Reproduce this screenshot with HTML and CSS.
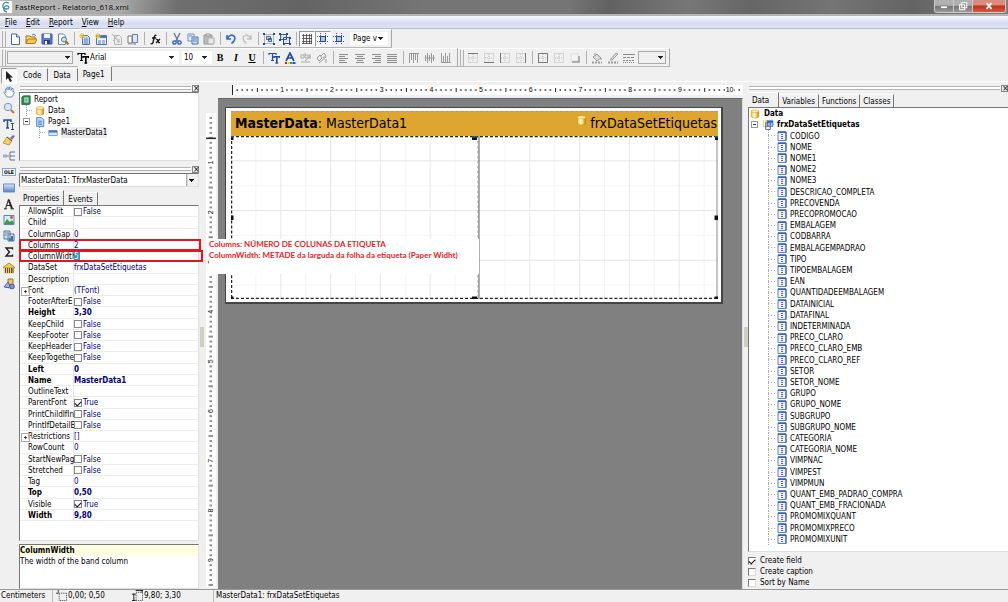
FILE: index.html
```html
<!DOCTYPE html>
<html lang="en">
<head>
<meta charset="utf-8">
<title>FastReport - Relatorio_618.xml</title>
<link rel="stylesheet" href="styles.css">
</head>
<body>
<svg class="defs" aria-hidden="true">
  <defs>
    <linearGradient id="gold"><stop offset="0" stop-color="#f3c13a"/><stop offset=".4" stop-color="#fffbd8"/><stop offset=".6" stop-color="#fbe27a"/><stop offset="1" stop-color="#c98206"/></linearGradient>
    <linearGradient id="blue" x2="0" y2="1"><stop offset="0" stop-color="#dcebfa"/><stop offset="1" stop-color="#4f81c4"/></linearGradient>
    <symbol id="new" viewBox="0 0 12 12"><path d="M2.500 1h5l3 3v7.500h-8z" fill="#fff" stroke="#49699a"/><path d="M7.500 1v3h3" fill="#dbe7f5" stroke="#49699a"/></symbol>
    <symbol id="open" viewBox="0 0 12 12"><path d="M1 10.500V3h4l1 1h4v2" fill="#f5d67a" stroke="#9b7423"/><path d="M1 10.500 3 6h9l-2 4.500z" fill="#f8c64a" stroke="#b37c1b"/><path d="M7 2q2-2 4 1" fill="none" stroke="#4b78ae"/></symbol>
    <symbol id="save" viewBox="0 0 12 12"><path d="M1 1h10v10H1z" fill="#5b78d8" stroke="#4050a8"/><path d="M3 1h6v4H3z" fill="#eef3ff"/><path d="M3 7h6v4H3z" fill="#2f3f80"/><path d="M4 8h2v3H4z" fill="#fff"/></symbol>
    <symbol id="preview" viewBox="0 0 12 12"><path d="M1.500 1h5l2 2v8.500h-7z" fill="#fff" stroke="#6d87a8"/><circle cx="7" cy="6.500" r="2.500" fill="#c9e3f2" stroke="#56717f"/><path d="m9 8.500 2.500 3" stroke="#a06c2c" stroke-width="2"/></symbol>
    <symbol id="newpage" viewBox="0 0 12 12"><path d="M3.500 2.500h5l2 2v7h-7z" fill="#c4daf3" stroke="#4b75ac"/><path d="M5 6h4M5 8h4M5 10h4" stroke="#5e83b8"/><path d="M3 0v6M0 3h6M1 1l4 4M5 1 1 5" stroke="#edbd28"/></symbol>
    <symbol id="newdlg" viewBox="0 0 12 12"><path d="M1.500 2.500h10v9h-10z" fill="#e8f0fb" stroke="#4b75ac"/><path d="M4 3h7v2H4z" fill="#3f76d2"/><path d="M3 8h3M7 8h3M3 10h3M7 10h3" stroke="#5e83b8"/><path d="M3 0v6M0 3h6M1 1l4 4M5 1 1 5" stroke="#edbd28"/></symbol>
    <symbol id="delpage" viewBox="0 0 12 12"><path d="M3.500 2.500h5l2 2v7h-7z" fill="#eee" stroke="#b4b4b4"/><path d="m1 1 7 8M7 2 2 8M6 7h3M6 9h3" stroke="#b4b4b4"/></symbol>
    <symbol id="pageset" viewBox="0 0 12 12"><path d="M1 3h4v7H1z" fill="#fff" stroke="#777"/><path d="M5.500 1.500h5v8h-5z" fill="#dfe9f4" stroke="#65809f"/><path d="M1 11h8M8 9v3" stroke="#8b9db3"/></symbol>
    <symbol id="fx" viewBox="0 0 12 12"><path d="M7.500 2.500Q6 1.500 5.300 4L4 9.500Q3.500 11.500 1.500 10.500M3 5h4M7 6.500q1.500-.5 2 1.500t2 1.500M11 6 7 10" fill="none" stroke="#111" stroke-width="1.300"/></symbol>
    <symbol id="cut" viewBox="0 0 12 12"><path d="m3 0 4 8M9 0 5 8" stroke="#5c7592" stroke-width="1.300"/><circle cx="3.500" cy="9.500" r="1.700" fill="none" stroke="#2556b4" stroke-width="1.300"/><circle cx="8.500" cy="9.500" r="1.700" fill="none" stroke="#2556b4" stroke-width="1.300"/></symbol>
    <symbol id="copy" viewBox="0 0 12 12"><path d="M1 1h6v7H1z" fill="#eaf2fc" stroke="#6d8fc0"/><path d="M5 4h6v7H5z" fill="#c9def6" stroke="#4a74b2"/><path d="M6 6h4M6 8h4M2 3h3" stroke="#6688bb"/></symbol>
    <symbol id="paste" viewBox="0 0 12 12"><path d="M1 2h8v9H1z" fill="#bbb" stroke="#999"/><path d="M3 1h4v2H3z" fill="#eee" stroke="#999"/><path d="M5 5h6v6H5z" fill="#e8e8e8" stroke="#aaa"/></symbol>
    <symbol id="undo" viewBox="0 0 12 12"><path d="M2 2v4h4M2 5.500Q6 0 9.500 3.500 11 7 6.500 10.500" fill="none" stroke="#2f67c5" stroke-width="1.600"/></symbol>
    <symbol id="redo" viewBox="0 0 12 12"><path d="M10 2v4H6M10 5.500Q6 0 2.500 3.500 1 7 5.500 10.500" fill="none" stroke="#c0c0c0" stroke-width="1.400"/></symbol>
    <symbol id="group" viewBox="0 0 12 12"><path d="M1.500 1.500h9v9h-9z" fill="none" stroke="#7b92b3" stroke-width=".6"/><path d="M3.500 3.500h4v3h-4zM5.500 5.500h3v3h-3z" fill="#bcd4ef" stroke="#254a80" stroke-width=".8"/><path d="M0 0h2v2H0zM10 0h2v2h-2zM0 10h2v2H0zM10 10h2v2h-2z" fill="#254a80"/></symbol>
    <symbol id="ungroup" viewBox="0 0 12 12"><path d="M1.500 1.500h6v5h-6zM4.500 4.500h6v6h-6z" fill="#d4e3f5" stroke="#254a80" stroke-width=".9"/><path d="M0 0h2v2H0zM7 0h2v2H7zM0 6h2v2H0zM10 10h2v2h-2zM4 10h2v2H4zM10 4h2v2h-2z" fill="#254a80"/></symbol>
    <symbol id="gridic" viewBox="0 0 12 12"><path d="M2.500 1v10M5.500 1v10M8.500 1v10M1 2.500h10M1 5.500h10M1 8.500h10M10.500 1v10M1 10.500h10" stroke="#444" stroke-width=".8"/></symbol>
    <symbol id="snap" viewBox="0 0 12 12"><path d="M3.500 0v12M8.500 0v12M0 3.500h12M0 8.500h12" stroke="#3d557b" stroke-dasharray="1 1"/><path d="M3.500 3.500h5v5h-5z" fill="#a8c8ee" stroke="#224a8c"/></symbol>
    <symbol id="tt" viewBox="0 0 12 12"><path d="M1 3V1.500h7V3M4.500 1.500v7M3 8.500h3" fill="none" stroke="currentColor" stroke-width="1.200"/><path d="M6 6V4.800h5.500V6M8.800 5v6M7.500 11h2.600" fill="none" stroke="currentColor" stroke-width="1.600"/></symbol>
    <symbol id="fcolor" viewBox="0 0 12 12"><path d="m2 9 4-8 4 8M3.500 6h5" fill="none" stroke="#1c4fa8" stroke-width="1.700"/><path d="M1 10h2v2H1z" fill="#d22"/><path d="M3.500 10h2v2h-2z" fill="#f2c200"/><path d="M6 10h2v2H6z" fill="#22a04a"/><path d="M8.500 10h3v2h-3z" fill="#2752d8"/></symbol>
    <symbol id="hilite" viewBox="0 0 12 12"><path d="M0 3h4v3H1V4M5 1v5h3V3H5M11 3H9v3h2M5 9l6-5M1 10h9" fill="none" stroke="#aaa"/></symbol>
    <symbol id="rotate" viewBox="0 0 12 12"><path d="m1 6 3-3 2 3-3 3zM5 4l3-3 2 3-3 2M3 11l7-6M10 7v4" fill="none" stroke="#999"/></symbol>
    <symbol id="al" viewBox="0 0 12 12"><path d="M1 2.500h9M1 4.500h6M1 6.500h9M1 8.500h6M1 10.500h8" stroke="#8b8b8b"/></symbol>
    <symbol id="ac" viewBox="0 0 12 12"><path d="M1 2.500h10M3 4.500h6M1 6.500h10M3 8.500h6M2 10.500h8" stroke="#8b8b8b"/></symbol>
    <symbol id="ar" viewBox="0 0 12 12"><path d="M2 2.500h9M5 4.500h6M2 6.500h9M5 8.500h6M3 10.500h8" stroke="#8b8b8b"/></symbol>
    <symbol id="aj" viewBox="0 0 12 12"><path d="M1 2.500h10M1 4.500h10M1 6.500h10M1 8.500h10M1 10.500h10" stroke="#8b8b8b"/></symbol>
    <symbol id="vt" viewBox="0 0 12 12"><path d="M1.500 1v10M3.500 1v7M5.500 1v10M7.500 1v7M9.500 1v10M1 1.500h10" stroke="#999"/></symbol>
    <symbol id="vm" viewBox="0 0 12 12"><path d="M1.500 3v6M3.500 1v10M5.500 3v6M7.500 1v10M9.500 3v6M1 6h10" stroke="#999"/></symbol>
    <symbol id="vb" viewBox="0 0 12 12"><path d="M1.500 1v10M3.500 4v7M5.500 1v10M7.500 4v7M9.500 1v10M1 10.500h10" stroke="#999"/></symbol>
    <symbol id="fr" viewBox="0 0 12 12"><path d="M1.500 1.500h9v9h-9zM6 2v8M2 6h8" fill="none" stroke="#bbb" stroke-dasharray="1 1"/></symbol>
    <symbol id="frt" viewBox="0 0 12 12"><use href="#fr"/><path d="M1 1.500h10" stroke="#777"/></symbol>
    <symbol id="frb" viewBox="0 0 12 12"><use href="#fr"/><path d="M1 10.500h10" stroke="#777"/></symbol>
    <symbol id="frl" viewBox="0 0 12 12"><use href="#fr"/><path d="M1.500 1v10" stroke="#777"/></symbol>
    <symbol id="frr" viewBox="0 0 12 12"><use href="#fr"/><path d="M10.500 1v10" stroke="#777"/></symbol>
    <symbol id="fra" viewBox="0 0 12 12"><use href="#fr"/><path d="M1.500 1.500h9v9h-9z" fill="none" stroke="#777"/></symbol>
    <symbol id="shadow" viewBox="0 0 12 12"><path d="M2 2h7v7H2z" fill="#f4f4f4" stroke="#ddd"/><path d="M3 10h7V4" fill="none" stroke="#999" stroke-width="1.500"/></symbol>
    <symbol id="fill" viewBox="0 0 12 12"><path d="m2 5 4-3 4 4-4 3zM4 4V1M10 6v2" fill="#ddd" stroke="#999"/><path d="M1 10.500h10" stroke="#999" stroke-width="2" stroke-dasharray="2 1"/></symbol>
    <symbol id="lcolor" viewBox="0 0 12 12"><path d="m3 8 6-7 2 1-6 6z" fill="#ddd" stroke="#999"/><path d="M1 10.500h10" stroke="#999" stroke-width="2" stroke-dasharray="2 1"/></symbol>
    <symbol id="lstyle" viewBox="0 0 12 12"><path d="M0 2.500h12" stroke="#888"/><path d="M0 5.500h12" stroke="#888" stroke-dasharray="3 1"/><path d="M0 8.500h12" stroke="#888" stroke-dasharray="2 1"/><path d="M0 10.500h12" stroke="#888" stroke-dasharray="1 1"/></symbol>
    <symbol id="arrow" viewBox="0 0 12 12"><path d="M3 1v9l2-2 2 4 2-1-2-3.500h3z" fill="#222"/></symbol>
    <symbol id="hand" viewBox="0 0 12 12"><path d="M4 11 1 6.500q0-1.500 2 0L2.500 3q1-1 1.700 1L4 1.500q1-1 1.700 0L6 4l.5-3q1-.7 1.500.5V4.500l1-2q1.500-.5 1.300 1L9.800 6l1-.5q1 .5 0 2L9 11z" fill="#fff" stroke="#4a73ad" stroke-width=".8"/></symbol>
    <symbol id="zoom" viewBox="0 0 12 12"><circle cx="5" cy="5" r="3.700" fill="#d5e8f9" stroke="#7898bb"/><path d="m8 8 3 3" stroke="#c07830" stroke-width="2"/></symbol>
    <symbol id="textedit" viewBox="0 0 12 12"><path d="M1 4V2h7v2M4.500 2v8M3 10h3" fill="none" stroke="#1f519c" stroke-width="1.500"/><path d="M8 5.500h3M9.500 5.500v6M8 11.500h3" stroke="#333" stroke-width=".9"/></symbol>
    <symbol id="brush" viewBox="0 0 12 12"><path d="m7 4 3-3 2 1-3 4z" fill="#7b6ea8"/><path d="m4 3 5 4-3 4-6-2z" fill="#f5cf5c" stroke="#9b7a2a" stroke-width=".7"/><path d="m4 3 5 4" stroke="#555"/></symbol>
    <symbol id="band" viewBox="0 0 12 12"><path d="M4 6h2M11 2H7v8h4M7 6h4" fill="none" stroke="#555" stroke-width=".8"/><path d="M0 4.500h4v3H0zM9 1h3v2H9zM9 9h3v2H9zM9 5h3v2H9z" fill="#94b3dc"/></symbol>
    <symbol id="rect" viewBox="0 0 12 12"><path d="M.5 2h11v8H.5z" fill="url(#blue)" stroke="#6a8fc4"/></symbol>
    <symbol id="bigA" viewBox="0 0 12 12"><path d="m2.500 10.500 3-9" stroke="#222"/><path d="m5.500 1.500 3.500 9" stroke="#222" stroke-width="2"/><path d="M4 7.500h4M1 10.800h3M7.500 10.800h3.500" stroke="#222"/></symbol>
    <symbol id="pic" viewBox="0 0 12 12"><path d="M1 1.500h10v9H1z" fill="#d5ecfb" stroke="#5f86a8"/><path d="m1 10 3-5 3 3 2-2 2 3v1z" fill="#3d9a48"/><circle cx="8.500" cy="3.500" r="1.400" fill="#e04f2c"/></symbol>
    <symbol id="sub" viewBox="0 0 12 12"><path d="M1 1h6v8H1zM5 4h6v7H5z" fill="#d8e8f8" stroke="#4d77a6"/><path d="M2 3h4M2 5h2" stroke="#777"/><path d="M6 8h2v3H6z" fill="#3b9b4b"/><path d="M8 6h2v5H8z" fill="#376fd0"/></symbol>
    <symbol id="sigma" viewBox="0 0 12 12"><path d="M9.500 3.500V2H3l3.500 4L3 10h6.500V8.500" fill="none" stroke="#222" stroke-width="1.400"/></symbol>
    <symbol id="bank" viewBox="0 0 12 12"><path d="m.5 5 5.500-4 5.500 4v1H.5z" fill="#f3d052" stroke="#8b6a20" stroke-width=".7"/><path d="M1 6h10v5.500H1z" fill="#f0d060"/><path d="M2.500 6v5M4.500 6v5M6.500 6v5M8.500 6v5M10 6v5" stroke="#333" stroke-width=".8"/></symbol>
    <symbol id="shapes" viewBox="0 0 12 12"><path d="M5 1h5v6H5z" fill="#f1c84c" stroke="#96762c"/><path d="m1 9 4-5 3 6z" fill="#a9b6ea" stroke="#4b5ca8"/><circle cx="9" cy="8.500" r="2.400" fill="#7a92d6" stroke="#455c9e"/></symbol>
    <symbol id="cyl" viewBox="0 0 12 12"><path d="M1.500 2.500v7q4.500 3 9 0v-7z" fill="url(#gold)" stroke="#c08a18" stroke-width=".6"/><ellipse cx="6" cy="2.500" rx="4.500" ry="1.700" fill="#ffefad" stroke="#c99a22" stroke-width=".6"/></symbol>
    <symbol id="report" viewBox="0 0 12 12"><path d="M1 2.500 3 1h8v9l-1 1.500H1z" fill="#2e8b57" stroke="#1d6b3e"/><path d="M4 3h5v6H4z" fill="#c8ecd3"/><path d="M5 5h3M5 7h3" stroke="#2e8b57"/></symbol>
    <symbol id="page" viewBox="0 0 12 12"><path d="M2 .5h6l2.500 2.500v8.500H2z" fill="#b8d6f5" stroke="#3c78c8"/><path d="M4 5h4M4 7h4M4 9h4" stroke="#3c78c8"/></symbol>
    <symbol id="bandic" viewBox="0 0 12 12"><path d="M1 3h10v6H1z" fill="#dce9f8" stroke="#6c96cf"/><path d="M1 3h10v2.500H1z" fill="#4577c6"/></symbol>
    <symbol id="dset" viewBox="0 0 12 12"><path d="M1 1h5v8H1z" fill="url(#gold)"/><path d="M4 4h5v5H4zM6 2h6v6H6z" fill="#9dc0f2" stroke="#2f63c0" stroke-width=".8"/><path d="M6 2h6v2H6z" fill="#2f63c0"/><path d="M4 8h5v3.500H4z" fill="#eef" stroke="#668"/></symbol>
    <symbol id="field" viewBox="0 0 10 10"><path d="M1 .8h8v8.700H1z" fill="#eef2fa" stroke="#5d84c8"/><path d="M1 .5h8v1.500H1z" fill="#3565c0"/><path d="M9 1v8.500" stroke="#2c58ae"/><path d="M4 3.500h2M4 5.500h2M4 7.500h2" stroke="#667"/></symbol>
    <symbol id="pos" viewBox="0 0 12 12"><path d="M3.500 3.500h8v8h-8z" fill="none" stroke="#333" stroke-dasharray="1 1"/><path d="M0 3.500h3M2.500 0v3" stroke="#333"/></symbol>
    <symbol id="size" viewBox="0 0 12 12"><path d="M4.500 2.500h7v9h-7z" fill="none" stroke="#333" stroke-dasharray="1 1"/><path d="M4 .5h8M2 4v8M0 4.500h4M0 11.500h4M11 0v3" stroke="#111"/></symbol>
  </defs>
</svg>

<header class="titlebar">
  <svg class="logo" viewBox="0 0 12 12"><path d="M9 2Q4 0 3 4t4 4q3-1 1-3-3-1-4 2t3 4" fill="none" stroke="#3d90ab" stroke-width="1.300"/></svg>
  <h1>FastReport - Relatorio_618.xml</h1>
  <div class="winbtns">
    <button aria-label="Minimize"><svg viewBox="0 0 12 12"><path d="M2 6h8v3H2z" fill="#fff" stroke="#555" stroke-width=".6"/></svg></button>
    <button aria-label="Restore"><svg viewBox="0 0 12 12"><path d="M4.500 2h6v6h-6zM2 4.500h6v6H2z" fill="#888" stroke="#fff" stroke-width="1.300"/></svg></button>
    <button class="close" aria-label="Close"><svg viewBox="0 0 12 12"><path d="m3 2.500 6 7M9 2.500l-6 7" stroke="#fff" stroke-width="2.200"/></svg></button>
  </div>
</header>

<nav class="menu"><a href="#"><u>F</u>ile</a><a href="#"><u>E</u>dit</a><a href="#"><u>R</u>eport</a><a href="#"><u>V</u>iew</a><a href="#"><u>H</u>elp</a></nav>

<div class="bars">
  <div class="bar">
    <i class="grip"></i>
    <button aria-label="New"><svg><use href="#new"/></svg></button><button aria-label="Open"><svg><use href="#open"/></svg></button><button aria-label="Save"><svg><use href="#save"/></svg></button><button aria-label="Preview"><svg><use href="#preview"/></svg></button>
    <i class="sep"></i>
    <button aria-label="New page"><svg><use href="#newpage"/></svg></button><button aria-label="New dialog"><svg><use href="#newdlg"/></svg></button><button aria-label="Delete page"><svg><use href="#delpage"/></svg></button><button aria-label="Page settings"><svg><use href="#pageset"/></svg></button>
    <i class="sep"></i>
    <button aria-label="Variables"><svg><use href="#fx"/></svg></button>
    <i class="sep"></i>
    <button aria-label="Cut"><svg><use href="#cut"/></svg></button><button aria-label="Copy"><svg><use href="#copy"/></svg></button><button aria-label="Paste"><svg><use href="#paste"/></svg></button>
    <i class="sep"></i>
    <button aria-label="Undo"><svg><use href="#undo"/></svg></button><button aria-label="Redo"><svg><use href="#redo"/></svg></button>
    <i class="sep"></i>
    <button aria-label="Group"><svg><use href="#group"/></svg></button><button aria-label="Ungroup"><svg><use href="#ungroup"/></svg></button>
    <i class="sep"></i>
    <button class="on" aria-label="Show grid"><svg><use href="#gridic"/></svg></button><button class="on" aria-label="Align to grid"><svg><use href="#snap"/></svg></button><button aria-label="Fit to grid"><svg><use href="#snap"/></svg></button>
    <select class="pick zoompick" aria-label="Zoom"><option>Page v</option></select>
  </div>
  <div class="barrow">
    <div class="bar">
      <i class="grip"></i>
      <select class="pick stylepick sunk" aria-label="Style"><option></option></select>
      <svg class="fonticon"><use href="#tt"/></svg>
      <select class="pick fontpick" aria-label="Font"><option>Arial</option></select>
      <select class="pick sizepick" aria-label="Font size"><option>10</option></select>
      <button class="serif" aria-label="Bold"><b>B</b></button><button class="serif" aria-label="Italic"><em>I</em></button><button class="serif" aria-label="Underline"><u>U</u></button>
      <i class="sep"></i>
      <button class="navy" aria-label="Font settings"><svg><use href="#tt"/></svg></button><button aria-label="Font color"><svg><use href="#fcolor"/></svg></button><button aria-label="Highlight"><svg><use href="#hilite"/></svg></button><button aria-label="Rotation"><svg><use href="#rotate"/></svg></button>
      <i class="sep"></i>
      <button aria-label="Left"><svg><use href="#al"/></svg></button><button aria-label="Center"><svg><use href="#ac"/></svg></button><button aria-label="Right"><svg><use href="#ar"/></svg></button><button aria-label="Justify"><svg><use href="#aj"/></svg></button>
      <i class="sep"></i>
      <button aria-label="Align top"><svg><use href="#vt"/></svg></button><button aria-label="Align middle"><svg><use href="#vm"/></svg></button><button aria-label="Align bottom"><svg><use href="#vb"/></svg></button>
    </div>
    <div class="bar">
      <i class="grip"></i>
      <button aria-label="Top line"><svg><use href="#frt"/></svg></button><button aria-label="Bottom line"><svg><use href="#frb"/></svg></button><button aria-label="Left line"><svg><use href="#frl"/></svg></button><button aria-label="Right line"><svg><use href="#frr"/></svg></button>
      <i class="sep"></i>
      <button aria-label="All lines"><svg><use href="#fra"/></svg></button><button aria-label="No lines"><svg><use href="#fr"/></svg></button><button aria-label="Shadow"><svg><use href="#shadow"/></svg></button>
      <i class="sep"></i>
      <button aria-label="Fill"><svg><use href="#fill"/></svg></button><button aria-label="Line color"><svg><use href="#lcolor"/></svg></button><button aria-label="Line style"><svg><use href="#lstyle"/></svg></button>
      <select class="pick linepick sunk" aria-label="Line width"><option></option></select>
    </div>
  </div>
</div>

<main class="work">
  <aside class="tools">
    <button class="on" aria-label="Select"><svg><use href="#arrow"/></svg></button>
    <button aria-label="Hand"><svg><use href="#hand"/></svg></button>
    <button aria-label="Zoom"><svg><use href="#zoom"/></svg></button>
    <button aria-label="Edit text"><svg><use href="#textedit"/></svg></button>
    <button aria-label="Copy format"><svg><use href="#brush"/></svg></button>
    <button aria-label="Insert band"><svg><use href="#band"/></svg></button>
    <button class="ole" aria-label="OLE object"><span>OLE</span></button>
    <button aria-label="Rectangle"><svg><use href="#rect"/></svg></button>
    <button aria-label="Text object"><svg><use href="#bigA"/></svg></button>
    <button aria-label="Picture"><svg><use href="#pic"/></svg></button>
    <button aria-label="Subreport"><svg><use href="#sub"/></svg></button>
    <button aria-label="System text"><svg><use href="#sigma"/></svg></button>
    <button aria-label="Barcode"><svg><use href="#bank"/></svg></button>
    <button aria-label="Draw"><svg><use href="#shapes"/></svg></button>
  </aside>
  <div class="right">
    <div class="tabs pagetabs"><button>Code</button><button>Data</button><button class="cur">Page1</button></div>
    <div class="cols">
      <section class="left">
        <div class="dock"><i></i><button aria-label="Close report tree">×</button></div>
        <ul class="box rtree">
          <li><svg><use href="#report"/></svg>Report</li>
          <li class="l1"><i class="dash"></i><svg><use href="#cyl"/></svg>Data</li>
          <li class="l1 node"><i class="minus"></i><svg><use href="#page"/></svg>Page1</li>
          <li class="l2"><i class="dash"></i><svg><use href="#bandic"/></svg><span class="hot">MasterData1</span></li>
        </ul>
        <div class="dock"><i></i><button aria-label="Close inspector">×</button></div>
        <select class="combo" aria-label="Object"><option>MasterData1: TfrxMasterData</option></select>
        <div class="tabs proptabs"><button class="cur">Properties</button><button>Events</button></div>
        <table class="box props"><tbody>
          <tr><th>AllowSplit</th><td><label><input type="checkbox">False</label></td></tr>
          <tr><th>Child</th><td></td></tr>
          <tr><th>ColumnGap</th><td>0</td></tr>
          <tr class="mark"><th>Columns</th><td>2</td></tr>
          <tr class="mark wide"><th>ColumnWidth</th><td><input class="edit" aria-label="ColumnWidth" value="5"></td></tr>
          <tr><th>DataSet</th><td>frxDataSetEtiquetas</td></tr>
          <tr><th>Description</th><td></td></tr>
          <tr class="plus"><th>Font</th><td>(TFont)</td></tr>
          <tr><th>FooterAfterE</th><td><label><input type="checkbox">False</label></td></tr>
          <tr class="set"><th>Height</th><td>3,30</td></tr>
          <tr><th>KeepChild</th><td><label><input type="checkbox">False</label></td></tr>
          <tr><th>KeepFooter</th><td><label><input type="checkbox">False</label></td></tr>
          <tr><th>KeepHeader</th><td><label><input type="checkbox">False</label></td></tr>
          <tr><th>KeepTogethe</th><td><label><input type="checkbox">False</label></td></tr>
          <tr class="set"><th>Left</th><td>0</td></tr>
          <tr class="set"><th>Name</th><td>MasterData1</td></tr>
          <tr><th>OutlineText</th><td></td></tr>
          <tr><th>ParentFont</th><td><label><input type="checkbox" checked>True</label></td></tr>
          <tr><th>PrintChildIfIn</th><td><label><input type="checkbox">False</label></td></tr>
          <tr><th>PrintIfDetailE</th><td><label><input type="checkbox">False</label></td></tr>
          <tr class="plus"><th>Restrictions</th><td>[]</td></tr>
          <tr><th>RowCount</th><td>0</td></tr>
          <tr><th>StartNewPag</th><td><label><input type="checkbox">False</label></td></tr>
          <tr><th>Stretched</th><td><label><input type="checkbox">False</label></td></tr>
          <tr><th>Tag</th><td>0</td></tr>
          <tr class="set"><th>Top</th><td>0,50</td></tr>
          <tr><th>Visible</th><td><label><input type="checkbox" checked>True</label></td></tr>
          <tr class="set"><th>Width</th><td>9,80</td></tr>
        </tbody></table>
        <div class="box hint"><b>ColumnWidth</b><p>The width of the band column</p></div>
      </section>
      <i class="split"></i>
      <section class="design">
        <div class="hruler">
          <svg width="511" height="10" viewBox="0 0 1028 20">
            <defs><pattern id="hd" width="100" height="20" patternUnits="userSpaceOnUse"><path d="M9 10h3M19 10h3M29 10h3M39 10h3M59 10h3M69 10h3M79 10h3M89 10h3" stroke="#222" stroke-width="3"/><path d="M51 6v8" stroke="#222" stroke-width="2"/></pattern></defs>
            <path d="M0 0h1028v20H0z" fill="url(#hd)"/><path d="M1 0v20" stroke="#222" stroke-width="2"/>
            <g class="nums"><text x="101" y="15">1</text><text x="201" y="15">2</text><text x="301" y="15">3</text><text x="401" y="15">4</text><text x="501" y="15">5</text><text x="601" y="15">6</text><text x="701" y="15">7</text><text x="801" y="15">8</text><text x="901" y="15">9</text><text x="1001" y="15">10</text></g>
          </svg>
        </div>
        <div class="vruler">
          <svg width="10" height="474" viewBox="0 0 20 954">
            <defs><pattern id="vd" width="20" height="100" patternUnits="userSpaceOnUse"><path d="M7 10h5M7 20h5M7 30h5M7 40h5M7 60h5M7 70h5M7 80h5M7 90h5M5 50h9" stroke="#222" stroke-width="2"/></pattern></defs>
            <path d="M0 0h20v954H0z" fill="url(#vd)"/><path d="M0 51h20" stroke="#222" stroke-width="3"/>
            <g class="nums"><text transform="translate(15 100) rotate(-90)">1</text><text transform="translate(15 200) rotate(-90)">2</text><text transform="translate(15 300) rotate(-90)">3</text><text transform="translate(15 400) rotate(-90)">4</text><text transform="translate(15 500) rotate(-90)">5</text><text transform="translate(15 600) rotate(-90)">6</text><text transform="translate(15 700) rotate(-90)">7</text><text transform="translate(15 800) rotate(-90)">8</text><text transform="translate(15 900) rotate(-90)">9</text></g>
          </svg>
        </div>
        <div class="surface">
          <div class="sheet">
            <div class="bandhead"><span><b>MasterData</b>: MasterData1</span><svg><use href="#cyl"/></svg><span>frxDataSetEtiquetas</span></div>
            <svg class="bandgrid" viewBox="0 0 978 328" preserveAspectRatio="none">
              <path d="M50 0v328M150 0v328M250 0v328M350 0v328M450 0v328M550 0v328M650 0v328M750 0v328M850 0v328M950 0v328M0 100h978M0 200h978M0 300h978" stroke="#f5f5f5" stroke-width="2"/>
              <path d="M100 0v328M200 0v328M300 0v328M400 0v328M600 0v328M700 0v328M800 0v328M900 0v328M0 50h978M0 150h978M0 250h978" stroke="#e6e6e6" stroke-width="2"/>
              <path d="M976 0v328" stroke="#888" stroke-width="2"/><path d="M498 0v328" stroke="#555" stroke-width="2"/><path d="M496 0v328" stroke="#999" stroke-width="2" stroke-dasharray="5 5"/>
              <path d="M1 0v328M0 327h978M0 1h978" stroke="#222" stroke-width="3" stroke-dasharray="6 4"/>
              <path d="M0 0h5v8H0zM484 0h10v8h-10zM972 0h6v8h-6zM0 160h5v9H0zM971 160h7v9h-7zM0 323h5v5H0zM484 323h10v5h-10zM971 323h7v5h-7z" fill="#111"/>
              <path d="M0 0h5v3H0zM484 0h10v3h-10zM972 0h6v3h-6z" fill="#2858b0"/>
            </svg>
          </div>
        </div>
        <div class="note"><p>Columns: NÚMERO DE COLUNAS DA ETIQUETA</p><p>ColumnWidth: METADE da larguda da folha da etiqueta (Paper Widht)</p></div>
      </section>
      <i class="split"></i>
      <section class="data">
        <div class="dock"><i></i><button aria-label="Close data panel">×</button></div>
        <div class="tabs datatabs"><button class="cur">Data</button><button>Variables</button><button>Functions</button><button>Classes</button></div>
        <ul class="box dtree">
          <li class="root"><svg><use href="#cyl"/></svg>Data</li>
          <li class="set1"><i class="minus"></i><svg><use href="#dset"/></svg>frxDataSetEtiquetas</li>
          <li><svg><use href="#field"/></svg>CODIGO</li>
          <li><svg><use href="#field"/></svg>NOME</li>
          <li><svg><use href="#field"/></svg>NOME1</li>
          <li><svg><use href="#field"/></svg>NOME2</li>
          <li><svg><use href="#field"/></svg>NOME3</li>
          <li><svg><use href="#field"/></svg>DESCRICAO_COMPLETA</li>
          <li><svg><use href="#field"/></svg>PRECOVENDA</li>
          <li><svg><use href="#field"/></svg>PRECOPROMOCAO</li>
          <li><svg><use href="#field"/></svg>EMBALAGEM</li>
          <li><svg><use href="#field"/></svg>CODBARRA</li>
          <li><svg><use href="#field"/></svg>EMBALAGEMPADRAO</li>
          <li><svg><use href="#field"/></svg>TIPO</li>
          <li><svg><use href="#field"/></svg>TIPOEMBALAGEM</li>
          <li><svg><use href="#field"/></svg>EAN</li>
          <li><svg><use href="#field"/></svg>QUANTIDADEEMBALAGEM</li>
          <li><svg><use href="#field"/></svg>DATAINICIAL</li>
          <li><svg><use href="#field"/></svg>DATAFINAL</li>
          <li><svg><use href="#field"/></svg>INDETERMINADA</li>
          <li><svg><use href="#field"/></svg>PRECO_CLARO</li>
          <li><svg><use href="#field"/></svg>PRECO_CLARO_EMB</li>
          <li><svg><use href="#field"/></svg>PRECO_CLARO_REF</li>
          <li><svg><use href="#field"/></svg>SETOR</li>
          <li><svg><use href="#field"/></svg>SETOR_NOME</li>
          <li><svg><use href="#field"/></svg>GRUPO</li>
          <li><svg><use href="#field"/></svg>GRUPO_NOME</li>
          <li><svg><use href="#field"/></svg>SUBGRUPO</li>
          <li><svg><use href="#field"/></svg>SUBGRUPO_NOME</li>
          <li><svg><use href="#field"/></svg>CATEGORIA</li>
          <li><svg><use href="#field"/></svg>CATEGORIA_NOME</li>
          <li><svg><use href="#field"/></svg>VIMPNAC</li>
          <li><svg><use href="#field"/></svg>VIMPEST</li>
          <li><svg><use href="#field"/></svg>VIMPMUN</li>
          <li><svg><use href="#field"/></svg>QUANT_EMB_PADRAO_COMPRA</li>
          <li><svg><use href="#field"/></svg>QUANT_EMB_FRACIONADA</li>
          <li><svg><use href="#field"/></svg>PROMOMIXQUANT</li>
          <li><svg><use href="#field"/></svg>PROMOMIXPRECO</li>
          <li><svg><use href="#field"/></svg>PROMOMIXUNIT</li>
        </ul>
        <div class="opts">
          <label><input type="checkbox" checked>Create field</label>
          <label><input type="checkbox">Create caption</label>
          <label><input type="checkbox">Sort by Name</label>
        </div>
      </section>
    </div>
  </div>
</main>

<footer class="status">
  <span class="s1">Centimeters</span>
  <span class="s2"><span><svg><use href="#pos"/></svg>0,00; 0,50</span><span><svg><use href="#size"/></svg>9,80; 3,30</span></span>
  <span class="s3">MasterData1: frxDataSetEtiquetas</span>
</footer>
</body>
</html>
```
FILE: styles.css
```css
* { box-sizing: border-box; }
body {
  margin: 0;
  height: 100vh;
  display: flex;
  flex-direction: column;
  overflow: hidden;
  background: #f0f0f0;
  color: #000;
  font: 8px/11px "DejaVu Sans Condensed", "DejaVu Sans", sans-serif;
}
button, input, select { font: inherit; color: inherit; margin: 0; padding: 0; border: 0; background: none; border-radius: 0; }
ul, p, h1 { margin: 0; padding: 0; list-style: none; font-size: inherit; font-weight: inherit; }
svg { display: block; flex: none; }
a { color: inherit; text-decoration: none; }
i { display: block; flex: none; }
.defs { position: absolute; width: 0; height: 0; }

/* window title */
.titlebar {
  flex: none;
  height: 16px;
  display: flex;
  align-items: center;
  border-bottom: 2px solid #b4b4b4;
  background: linear-gradient(100deg, #b8b8b8 0, #a6a6a6 120px, #6f6f6f 175px, #646464 300px, #757575 420px, #757575 560px, #626262 600px, #777 680px, #666 740px, #747474 820px, #646464 900px, #808080 1000px);
}
.logo { width: 12px; height: 12px; background: #fff; margin-right: 3px; }
.titlebar h1 { font: 8px/14px "Open Sans", sans-serif; text-shadow: 0 0 4px #ddd; }
.winbtns { margin: 0 2px 1px auto; display: flex; align-self: stretch; border: 1px solid #ccc; border-top: 0; border-radius: 0 0 3px 3px; overflow: hidden; }
.winbtns button { width: 19px; display: grid; place-items: center; border-right: 1px solid #ccc; background: linear-gradient(#b0b0b0 45%, #757575 50%, #999); }
.winbtns svg { width: 10px; height: 10px; }
.winbtns .close { width: 32px; border: 0; background: linear-gradient(#dc8c7c 40%, #c0321a 50%, #d6583c); }

.menu { flex: none; height: 13px; display: flex; gap: 9px; padding: 1px 5px; border-bottom: 1px solid #b5bcd0; background: linear-gradient(#f8f9fd, #d5dcee 60%, #dde3f2); }

/* toolbars */
.bars { flex: none; display: flex; flex-direction: column; align-items: flex-start; }
.barrow { display: flex; }
.bar { height: 19px; display: flex; align-items: center; padding: 0 3px 0 2px; border: solid; border-width: 1px 1px 1px 0; border-color: #fff #a8a8a8 #b5b5b5 #fff; }
.grip { width: 4px; height: 16px; margin-right: 1px; border: solid #b0b0b0; border-width: 0 1px; }
.sep { width: 6px; height: 13px; background: linear-gradient(#b0b0b0, #b0b0b0) center / 1px 100% no-repeat; }
.bar button { width: 16px; height: 16px; display: grid; place-items: center; }
.bar svg { width: 12px; height: 12px; }
.bar .on, .tools .on { border: 1px solid; border-color: #999 #fff #fff #999; background: #f8f8f8; }
.bar .serif { font: 10px/14px "Liberation Serif", serif; }
.serif b, .serif u, .serif em { font-weight: 700; }
.navy { color: #1f4f9a; }
.pick { height: 13px; padding-left: 3px; background: linear-gradient(#222, #222) right 6px top 6px / 3px 1px no-repeat, linear-gradient(#222, #222) right 5px top 5px / 5px 1px no-repeat, linear-gradient(#222, #222) right 7px top 7px / 1px 1px no-repeat, #fff; appearance: none; }
.sunk { border: 1px solid #aaa; background-color: #f0f0f0; background-position: right 3px top 5px, right 2px top 4px, right 4px top 6px, 0 0; }
.zoompick { width: 38px; margin-left: 3px; }
.stylepick { width: 66px; }
.fonticon { margin: 0 0 0 4px; }
.fontpick { width: 89px; padding-left: 0; margin-left: 1px; }
.sizepick { width: 30px; margin: 0 0 0 3px; padding-left: 2px; }
.linepick { width: 28px; margin-left: 1px; }

.work { flex: 1; min-height: 0; display: flex; }
.tools { flex: none; width: 18px; padding: 1px; display: flex; flex-direction: column; }
.tools button { width: 16px; height: 16px; display: grid; place-items: center; }
.tools svg { width: 12px; height: 12px; }
.tools .ole span { padding: 0 1px; border: 1px solid #87a5c9; background: #f4f8fc; font: 700 5px/6px "DejaVu Sans Condensed", sans-serif; }
.right { flex: 1; min-width: 0; display: flex; flex-direction: column; }

.tabs { flex: none; display: flex; align-items: flex-end; }
.tabs button { height: 13px; padding: 0 4px; border: solid; border-width: 1px 1px 0 0; border-color: #fff #777 #777; }
.tabs .cur { height: 15px; }
.pagetabs { height: 15px; border-bottom: 1px solid #fff; }
.pagetabs button { padding: 0 6px 0 5px; }
.proptabs { height: 16px; padding-top: 2px; }
.datatabs { height: 15px; }
.datatabs button { padding: 0 3px; }
.datatabs .cur { padding: 0 9px 0 4px; }

.cols { flex: 1; min-height: 0; display: flex; padding-top: 2px; }
.dock { flex: none; height: 8px; display: flex; align-items: center; gap: 1px; padding-left: 1px; }
.dock i { flex: 1; height: 4px; border: solid #b5b5b5; border-width: 1px 0; background: #fff; }
.dock button { width: 7px; height: 7px; border: 1px solid #888; font: 8px/5px "DejaVu Sans", sans-serif; }
.box { margin: 0; background: #fff; border: solid; border-width: 1px; border-color: #777 #ddd #ddd #777; }

/* report tree and object inspector */
.left { flex: none; width: 181px; display: flex; flex-direction: column; padding: 0 0 0 1px; }
.rtree { height: 69px; margin-bottom: 4px; padding: 1px 0 0 1px; }
.rtree li { display: flex; align-items: center; height: 11px; gap: 3px; }
.rtree svg { width: 10px; height: 10px; }
.rtree .l1 { padding-left: 5px; }
.rtree .node { padding-left: 2px; }
.rtree .l2 { padding-left: 18px; }
.dash { width: 6px; height: 11px; border-left: 1px dotted #999; background: linear-gradient(90deg, #aaa 50%, transparent 0) 0 5px / 2px 1px repeat-x; }
.minus { width: 7px; height: 7px; border: 1px solid #999; background: linear-gradient(#333, #333) center / 3px 1px no-repeat; }
.rtree .minus { margin-right: 2px; }
.hot { background: #ececec; }
.combo { flex: none; height: 14px; margin: 0 0 2px; padding-left: 1px; border: 1px solid; border-color: #777 #ddd #ddd #777; appearance: none; background: linear-gradient(#111, #111) right 4px top 5px / 5px 1px no-repeat, linear-gradient(#111, #111) right 5px top 6px / 3px 1px no-repeat, linear-gradient(#111, #111) right 6px top 7px / 1px 1px no-repeat, linear-gradient(90deg, #999, #f0f0f0 2px) right / 12px 100% no-repeat, #fff; }
.props { flex: 1; min-height: 0; display: flex; }
.props tbody { flex: 1; min-width: 0; display: flex; flex-direction: column; }
.props tbody::after { content: ""; flex: 2 1 0; max-height: 19px; }
.props tr { flex: 1 1 0; min-height: 0; display: grid; grid-template-columns: 54px 1fr; border-bottom: 1px solid #ececec; position: relative; }
.props th { padding: 0 0 0 8px; font-weight: 400; text-align: left; white-space: nowrap; border-right: 1px solid #e4e4e4; }
.props td { padding: 0; color: #000080; white-space: nowrap; }
.props .set, .props .set th { font-weight: 700; }
.props label { display: flex; align-items: center; gap: 1px; }
.props .plus::before { content: ""; position: absolute; left: 1px; top: 2px; width: 7px; height: 7px; border: 1px solid #aaa; background: linear-gradient(#444, #444) center / 3px 1px no-repeat, linear-gradient(#444, #444) center / 1px 3px no-repeat; }
.props .mark::after { content: ""; position: absolute; inset: -1px -3px -1px -1px; border: 2px solid #e5141e; z-index: 1; pointer-events: none; }
.props .wide::after { right: -5px; }
.edit { display: block; width: 6px; height: 9px; background: #3390e8; color: #fff; outline: 0; }
.props tr.wide td { padding-top: 1px; }
input[type=checkbox] { appearance: none; flex: none; width: 8px; height: 8px; border: 1px solid #888; background: #fff; display: grid; place-items: center; }
input[type=checkbox]:checked::after { content: ""; width: 3px; height: 5px; border: solid #111; border-width: 0 1px 1px 0; rotate: 45deg; }
.hint { height: 45px; margin-top: 3px; }
.hint b { display: block; background: #ffffe1; }

.split { width: 5px; background: linear-gradient(#ccd0c0, #ccd0c0) center 50% / 4px 20px no-repeat; }

/* design area */
.design { flex: 1; min-width: 0; display: grid; grid-template: 14px 1fr / 14px 1fr; position: relative; }
.hruler { grid-column: 2; overflow: hidden; padding-left: 14px; }
.hruler svg { background: #fff; margin-top: 1px; }
.vruler { grid-row: 2; overflow: hidden; padding: 15px 0 0 2px; }
.vruler svg { background: #fff; }
.nums { font: 14px "Liberation Sans", sans-serif; text-anchor: middle; fill: #000; stroke: #fff; stroke-width: 5px; paint-order: stroke; }
.surface { grid-row: 2; grid-column: 2; overflow: hidden; background: #808080; padding: 8px 8px 8px 7px; border: solid; border-width: 1px 1px 0 0; border-color: #666 #ddd #fff #fff; }
.sheet { width: 498px; padding: 3px 3px 3px 5px; background: #fff; border: solid #444; border-width: 1px 2px 2px 1px; }
.bandhead { height: 25px; display: flex; align-items: center; padding: 0 1px 3px 4px; background: #dfa62f; border-top: 1px dashed #999; font-size: 14px; line-height: 20px; white-space: nowrap; }
.bandhead svg { width: 11px; height: 11px; margin: 0 3px 4px auto; }
.bandgrid { width: 100%; height: 163px; }
.note { position: absolute; left: 5px; top: 155px; width: 270px; height: 35px; background: #fff; color: #ed1c24; font: 700 8px/11px Lato, sans-serif; white-space: nowrap; }

/* data panel */
.data { flex: none; width: 260px; display: flex; flex-direction: column; }
.dtree { flex: 1; min-height: 0; display: flex; flex-direction: column; border-right: 0; }
.dtree::after { content: ""; flex: 1 1 0; max-height: 6px; }
.dtree li { flex: 1 1 0; min-height: 0; display: flex; align-items: center; gap: 3px; padding-left: 28px; background: linear-gradient(90deg, #aaa 50%, transparent 0) 19px 5px / 2px 1px no-repeat, linear-gradient(90deg, #aaa 50%, transparent 0) 22px 5px / 2px 1px no-repeat, linear-gradient(90deg, #aaa 50%, transparent 0) 25px 5px / 2px 1px no-repeat, linear-gradient(#aaa 50%, transparent 0) 19px 0 / 1px 2px repeat-y; }
.dtree li svg { width: 10px; height: 10px; }
.dtree .root { padding-left: 1px; background: none; font-weight: 700; gap: 4px; }
.dtree .set1 { padding-left: 2px; background: none; font-weight: 700; }
.dtree .set1 svg { width: 13px; height: 11px; }
.opts { flex: none; padding: 3px 0 1px; display: flex; flex-direction: column; }
.opts label { display: flex; align-items: center; gap: 4px; }
.opts input { border-color: #777 #ddd #ddd #777; }

.status { flex: none; height: 13px; display: flex; gap: 2px; border-top: 1px solid #999; }
.status > span { border-right: 1px solid #bbb; white-space: nowrap; }
.status svg { width: 11px; height: 11px; }
.s1 { width: 53px; padding-left: 1px; }
.s2 { width: 159px; display: flex; }
.s2 span { width: 76px; display: flex; gap: 1px; padding-left: 1px; }
.status .s3 { flex: 1; border: 0; }
```
